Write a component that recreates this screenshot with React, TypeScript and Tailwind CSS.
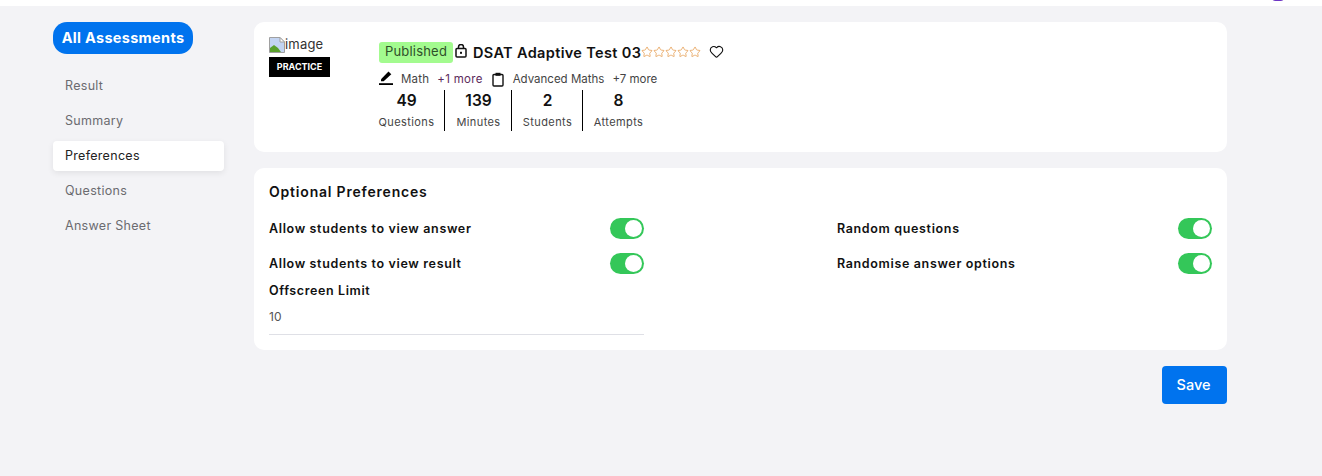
import { Heart, Star } from "lucide-react"

const font = "font-['Inter','Noto_Sans',sans-serif]"

const menu = ["Result", "Summary", "Preferences", "Questions", "Answer Sheet"]

const stats = [
  { value: "49", label: "Questions", cls: "w-[66px] pr-[10px] border-r" },
  { value: "139", label: "Minutes", cls: "w-[67px] pl-[1px] border-r" },
  { value: "2", label: "Students", cls: "w-[71px] pl-[1px] border-r" },
  { value: "8", label: "Attempts", cls: "w-[71px]" },
]

function Toggle() {
  return (
    <div className="flex h-[21px] w-[34px] items-center justify-end rounded-full bg-[#34c759] pr-[2px]">
      <div className="h-[17px] w-[17px] rounded-full bg-white" />
    </div>
  )
}

function Row({ label }: { label: string }) {
  return (
    <div className="flex h-[35px] items-center justify-between">
      <span className="pt-[2px] text-[12.5px] font-semibold tracking-[0.65px] text-[#111]">{label}</span>
      <Toggle />
    </div>
  )
}

function BrokenImage() {
  return (
    <svg width="16" height="16" viewBox="0 0 16 16" className="shrink-0">
      <path d="M0.5 0.5H11L15.5 5V15.5H0.5Z" fill="#c3d4f2" stroke="#a0a0a0" />
      <path d="M1 15V11L5 8L9 11L12 15Z" fill="#5aa02c" />
      <path d="M11 0.5V5H15.5Z" fill="#fff" stroke="#a0a0a0" />
    </svg>
  )
}

export default function App() {
  return (
    <div className={`${font} flex h-[476px] flex-col overflow-hidden bg-[#f3f3f6]`}>
      <div className="relative h-[6px] shrink-0 bg-white">
        <div className="absolute left-[1271px] top-[-8px] h-[9px] w-[14px] rounded-full bg-[#6d35c4]" />
      </div>

      <div className="flex gap-[30px] pl-[53px] pt-[16px]">
        {/* Sidebar */}
        <div className="w-[171px] shrink-0">
          <div className="flex h-[32px] w-[140px] items-center justify-center rounded-[14px] bg-[#0073ee] text-[14.5px] font-bold tracking-[0.3px] text-white">
            All Assessments
          </div>
          <div className="mt-[17px] flex flex-col gap-[5px]">
            {menu.map((item) => (
              <div
                key={item}
                className={`flex h-[30px] items-center rounded-[4px] pl-[12px] text-[12.5px] tracking-[0.3px] ${
                  item === "Preferences" ? "bg-white tracking-[0.2px] text-[#222] shadow-[0_2px_6px_rgba(0,0,0,0.08)]" : "text-[#6b6b70]"
                }`}
              >
                {item}
              </div>
            ))}
          </div>
        </div>

        {/* Main */}
        <div className="w-[973px] shrink-0">
          <div className="flex h-[130px] rounded-[10px] bg-white pl-[15px] pt-[15px]">
            <div className="w-[110px] shrink-0">
              <div className="flex h-[16px] items-center text-[13px] tracking-[0.2px] text-[#333]">
                <BrokenImage />
                image
              </div>
              <div className="mt-[4px] flex h-[20px] w-[61px] items-center justify-center bg-black text-[9px] font-bold text-white">
                PRACTICE
              </div>
            </div>

            <div className="pt-[5px]">
              <div className="flex h-[21px] items-center">
                <span className="flex h-[21px] w-[74px] items-center justify-center rounded-[3px] bg-[#a3fb8f] pb-[1px] text-[13px] tracking-[0.2px] text-[#2f4f2a]">
                  Published
                </span>
                <svg width="12" height="14" viewBox="0 0 12 14" fill="none" stroke="#111" strokeWidth="1.5" className="ml-[2px] mr-[6px] -translate-y-[2px]">
                  <rect x="1" y="4.5" width="10" height="8.5" rx="1" />
                  <path d="M3.5 4.5V3a2.5 2.5 0 0 1 5 0v1.5" />
                  <rect x="5" y="7.8" width="2" height="2" fill="#111" stroke="none" />
                </svg>
                <span className="text-[14.5px] font-semibold tracking-[0.35px] text-[#111]">DSAT Adaptive Test 03</span>
                <span className="flex -translate-y-[1px]">
                  {[0, 1, 2, 3, 4].map((i) => (
                    <Star key={i} size={12} strokeWidth={1.3} className="text-[#e08a2e]" />
                  ))}
                </span>
                <Heart size={15} strokeWidth={1.8} className="ml-[8px] -translate-y-[1px] text-[#111]" />
              </div>

              <div className="mt-[8px] flex h-[18px] items-center text-[11.5px] text-[#444]">
                <svg width="14" height="14" viewBox="0 0 14 14" className="mr-[8px] -translate-y-[2px]" fill="#000">
                  <path d="M1.5 10L9 2.2L11.8 5L4.2 12H1.5Z" transform="translate(0.5 -1.8)" />
                  <rect x="0" y="12.2" width="14" height="1.8" />
                </svg>
                <span className="tracking-[0.2px]">Math</span>
                <span className="ml-[8px] tracking-[0.3px] text-[#5c2a5c]">+1 more</span>
                <svg width="12" height="15" viewBox="0 0 12 15" fill="none" stroke="#111" strokeWidth="1.4" className="ml-[9px] mr-[9px] -translate-y-[1px]">
                  <rect x="1" y="2.5" width="10" height="11.5" rx="1" />
                  <rect x="3.5" y="0.8" width="5" height="3" fill="#111" stroke="none" />
                </svg>
                <span>Advanced Maths</span>
                <span className="ml-[8px]">+7 more</span>
              </div>

              <div className="mt-[1px] flex">
                {stats.map((s) => (
                  <div key={s.label} className={`flex h-[41px] flex-col items-center border-black ${s.cls}`}>
                    <span className="mt-[1px] text-[15.5px] font-semibold leading-[20px] text-[#111]">{s.value}</span>
                    <span className="mt-[3px] text-[11px] leading-[16px] tracking-[0.4px] text-[#444]">{s.label}</span>
                  </div>
                ))}
              </div>
            </div>
          </div>

          <div className="mt-[16px] h-[182px] rounded-[10px] bg-white px-[15px] pt-[14px]">
            <div className="text-[14px] font-semibold leading-[20px] tracking-[0.8px] text-[#111]">Optional Preferences</div>
            <div className="mt-[9px] grid grid-cols-2 gap-x-[193px]">
              <div>
                <Row label="Allow students to view answer" />
                <Row label="Allow students to view result" />
                <div className="mt-[2px] text-[12.5px] font-semibold leading-[16px] tracking-[0.6px] text-[#111]">Offscreen Limit</div>
                <div className="mt-[9px] h-[27px] border-b border-[#dfe0e6] text-[12px] text-[#555]">10</div>
              </div>
              <div>
                <Row label="Random questions" />
                <Row label="Randomise answer options" />
              </div>
            </div>
          </div>

          <div className="mt-[16px] flex justify-end">
            <button className="h-[38px] w-[65px] rounded-[4px] bg-[#0073ee] pr-[2px] text-[14.5px] font-medium text-white">Save</button>
          </div>
        </div>
      </div>
    </div>
  )
}
